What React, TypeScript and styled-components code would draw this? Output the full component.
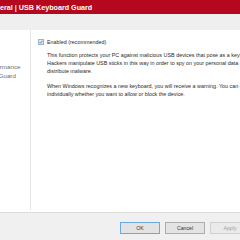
import styled, { createGlobalStyle } from 'styled-components';

const GlobalStyle = createGlobalStyle`
  html, body {
    margin: 0;
    padding: 0;
    width: 240px;
    height: 240px;
    overflow: hidden;
    background: #ffffff;
  }
  body {
    font-family: 'Liberation Sans', Arial, sans-serif;
  }
`;

const Window = styled.div`
  margin-left: -70px;
  width: 330px;
  height: 240px;
  display: flex;
  flex-direction: column;
  background: #ffffff;
`;

const TitleBar = styled.div`
  height: 14px;
  flex: none;
  display: flex;
  align-items: center;
  padding-left: 56px;
  background: #b5081f;
  color: #ffffff;
  font-size: 7.2px;
  font-weight: bold;
  white-space: nowrap;
`;

const Toolbar = styled.div`
  height: 16px;
  flex: none;
  background: #efefef;
`;

const Body = styled.div`
  flex: 1;
  display: flex;
  padding-bottom: 2px;
`;

const Sidebar = styled.div`
  width: 100px;
  flex: none;
  border-right: 1px solid #e6e6e6;
  padding-top: 32px;
  font-size: 6.2px;
  color: #6e6e6e;
`;

const NavItem = styled.div<{ $indent: number }>`
  height: 9px;
  line-height: 9px;
  padding-left: ${(p) => p.$indent}px;
  white-space: nowrap;
`;

const Main = styled.div`
  flex: 1;
  padding: 8px 0 0 7px;
  font-size: 5.4px;
  color: #2b2b2b;
  white-space: nowrap;
`;

const CheckRow = styled.label`
  display: flex;
  align-items: center;
  gap: 3px;
  height: 7px;
`;

const Check = styled.span`
  width: 6px;
  height: 6px;
  flex: none;
  box-sizing: border-box;
  border: 1px solid #9ab3d4;
  background: #dde8f6;
  display: flex;
  align-items: center;
  justify-content: center;
`;

const Description = styled.div`
  padding-left: 9px;
  padding-top: 6px;
`;

const Para = styled.p`
  margin: 0 0 7px;
  line-height: 8px;
`;

const Footer = styled.div`
  height: 28px;
  flex: none;
  box-sizing: border-box;
  border-top: 1px solid #dcdcdc;
  background: #f0f0f0;
  display: flex;
  justify-content: flex-end;
  align-items: flex-start;
  gap: 5px;
  padding: 9px 10px 0 0;
`;

const Button = styled.button<{ $primary?: boolean }>`
  width: 40px;
  height: 12px;
  padding: 0;
  box-sizing: border-box;
  font-family: inherit;
  font-size: 5.2px;
  color: ${(p) => (p.disabled ? '#a3a3a3' : '#333333')};
  background: ${(p) => (p.disabled ? '#eaeaea' : '#e3e3e3')};
  border: 1px solid
    ${(p) => (p.$primary ? '#6aa8e8' : p.disabled ? '#d0d0d0' : '#adadad')};
`;

export default function App() {
  return (
    <>
      <GlobalStyle />
      <Window>
        <TitleBar>General | USB Keyboard Guard</TitleBar>
        <Toolbar />
        <Body>
          <Sidebar>
            <NavItem $indent={55}>Performance</NavItem>
            <NavItem $indent={26}>USB Keyboard Guard</NavItem>
          </Sidebar>
          <Main>
            <CheckRow>
              <Check>
                <svg width="4" height="4" viewBox="0 0 8 8">
                  <path d="M1 4.2 L3.2 6.4 L7 1.6" fill="none" stroke="#3b5a8a" strokeWidth="1.4" />
                </svg>
              </Check>
              Enabled (recommended)
            </CheckRow>
            <Description>
              <Para>
                This function protects your PC against malicious USB devices that pose as a keyboard.
                <br />
                Hackers manipulate USB sticks in this way in order to spy on your personal data or to
                <br />
                distribute malware.
              </Para>
              <Para>
                When Windows recognizes a new keyboard, you will receive a warning. You can decide
                <br />
                individually whether you want to allow or block the device.
              </Para>
            </Description>
          </Main>
        </Body>
        <Footer>
          <Button $primary>OK</Button>
          <Button>Cancel</Button>
          <Button disabled>Apply</Button>
        </Footer>
      </Window>
    </>
  );
}
